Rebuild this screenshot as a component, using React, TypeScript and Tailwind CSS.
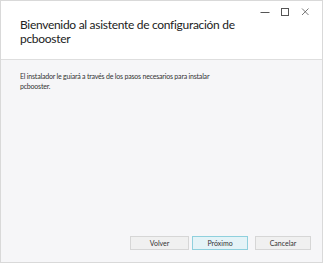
export default function App() {
  return (
    <div className="h-[264px] w-[328px] bg-white" style={{ fontFamily: 'Lato, sans-serif' }}>
      <div className="flex h-[263px] w-[323px] flex-col border border-[#d9d9d9] bg-[#f6f6f8]">
        <div className="relative h-[59px] shrink-0 border-b border-[#dedede] bg-white">
          <div className="absolute right-[12px] top-[6px] flex items-center gap-[10px] text-[#555]">
            <svg width="10" height="10" viewBox="0 0 10 10">
              <path d="M0.5 5.5h9" stroke="currentColor" strokeWidth="1" />
            </svg>
            <svg width="10" height="10" viewBox="0 0 10 10">
              <rect x="1.5" y="1.5" width="7" height="7" fill="none" stroke="currentColor" strokeWidth="1" />
            </svg>
            <svg width="10" height="10" viewBox="0 0 10 10">
              <path d="M2 1.5l6.5 6.5M8.5 1.5l-6.5 6.5" stroke="currentColor" strokeWidth="0.8" />
            </svg>
          </div>
          <h1 className="pl-[19px] pt-[17px] text-[12px] leading-[14px] tracking-[-0.3px] text-[#222]">
            Bienvenido al asistente de configuración de
            <br />
            pcbooster
          </h1>
        </div>
        <div className="flex flex-1 flex-col pb-[12px] pl-[19px] pr-[11px] pt-[11px]">
          <p className="text-[7px] leading-[10px] tracking-[-0.2px] text-[#333]">
            El instalador le guiará a través de los pasos necesarios para instalar
            <br />
            pcbooster.
          </p>
          <div className="mt-auto flex justify-end gap-[3px] text-[7px] text-[#333]">
            <button className="h-[14px] w-[59px] border border-[#d6d6d6] bg-[#f0f0f0]">Volver</button>
            <button className="h-[14px] w-[56px] border border-[#8fd0dd] bg-[#e4f3f7]">Próximo</button>
            <button className="ml-[4px] h-[14px] w-[56px] border border-[#d6d6d6] bg-[#f0f0f0]">Cancelar</button>
          </div>
        </div>
      </div>
    </div>
  );
}
